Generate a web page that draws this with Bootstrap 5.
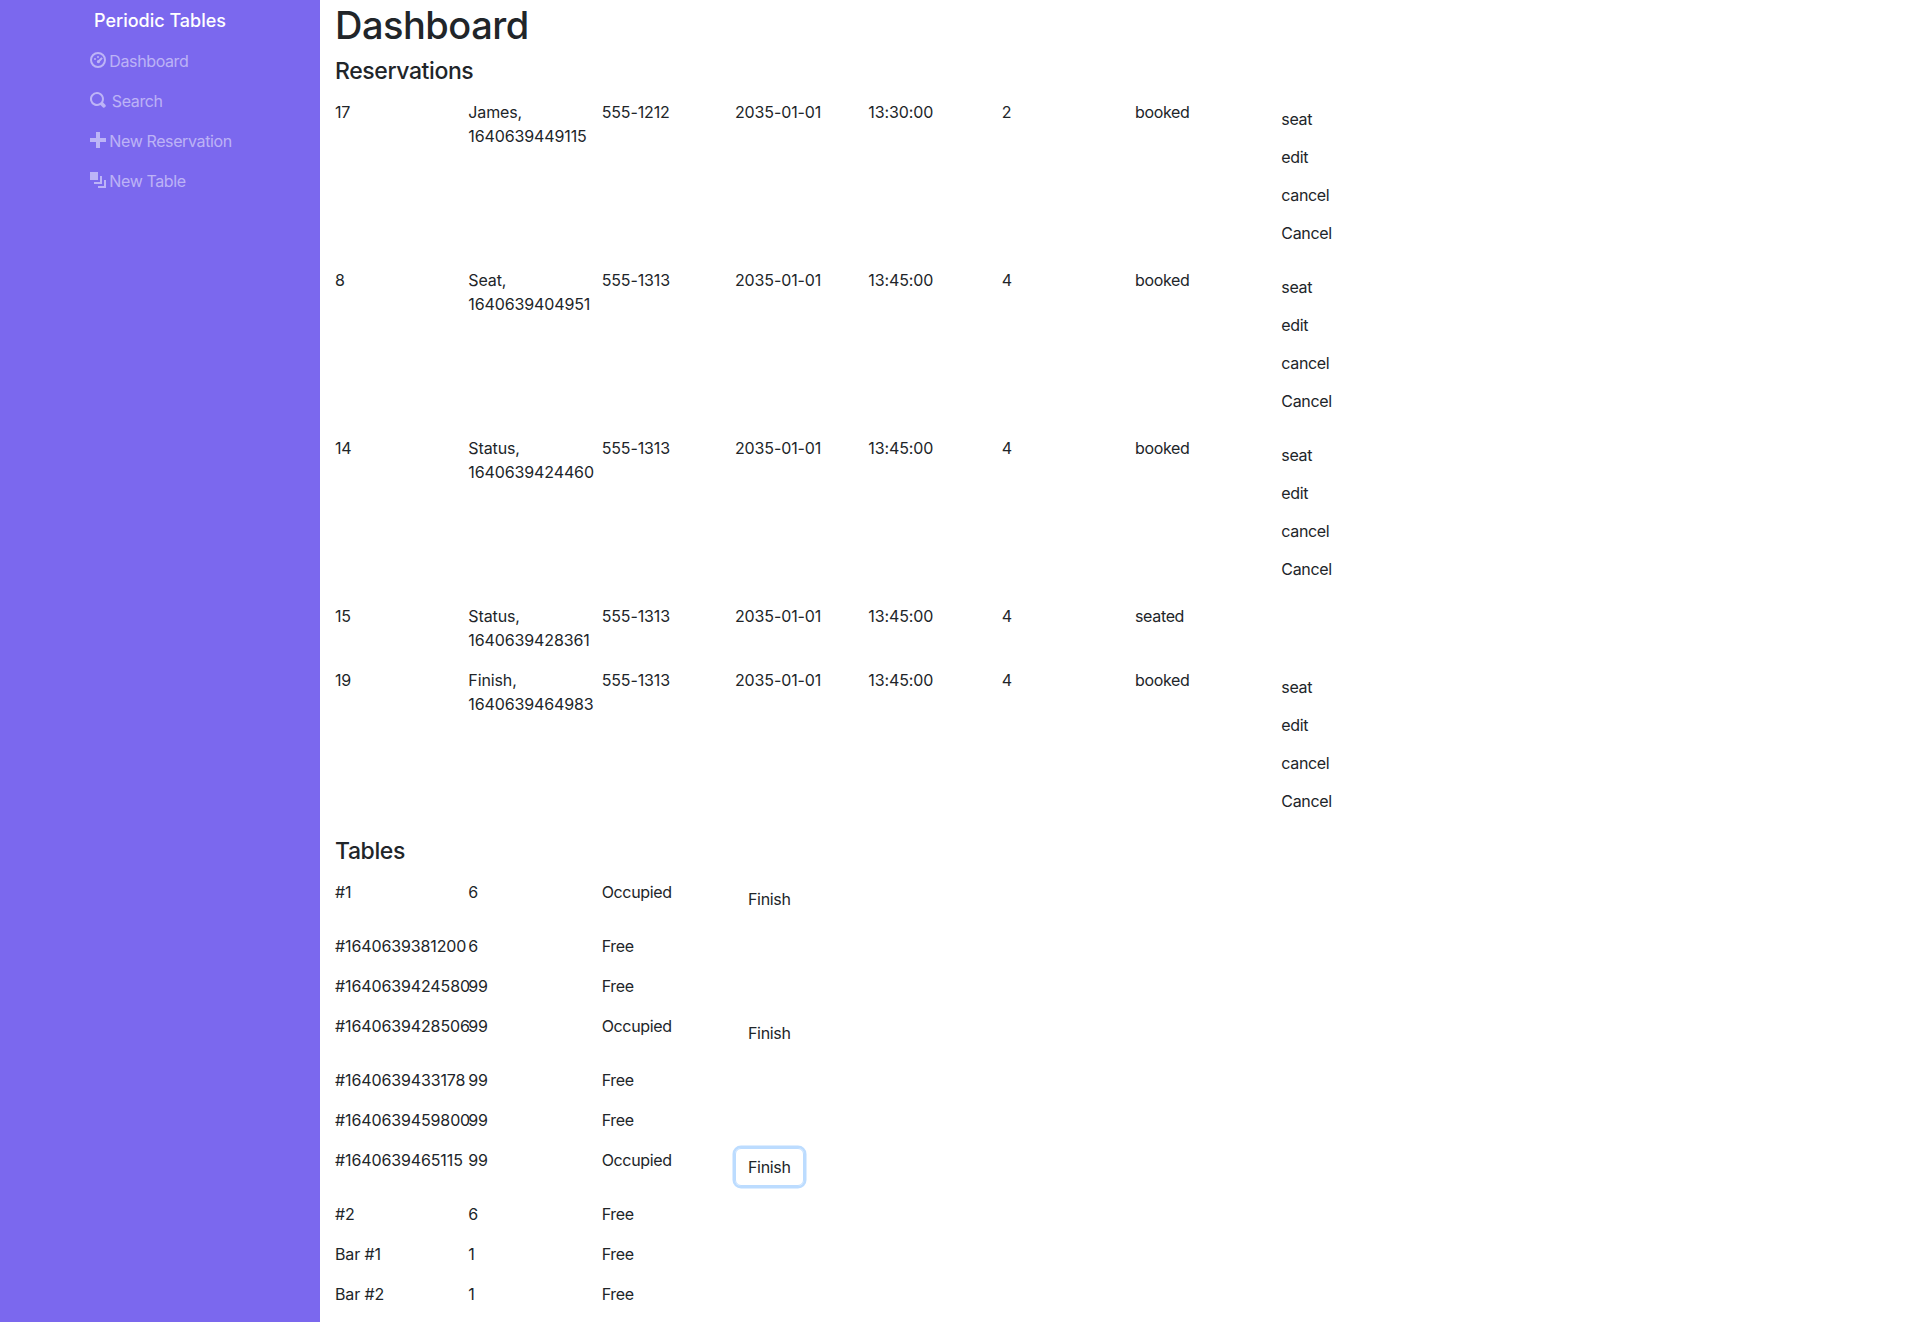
<!DOCTYPE html>
<html lang="en">
  <head>
    <meta charset="UTF-8" />
    <meta name="viewport" content="width=device-width, initial-scale=1.0" />
    <title>Periodic Tables</title>
    <link
      href="https://cdn.jsdelivr.net/npm/bootstrap@5.3.3/dist/css/bootstrap.min.css"
      rel="stylesheet"
    />
    <style>
      body {
        font-family: Inter, "Liberation Sans", sans-serif;
        color: #212529;
        letter-spacing: -0.33px;
      }
      .side-col {
        background: #7b68ee;
      }
      .brand-title {
        color: #fff;
        font-size: 18px;
        line-height: 41px;
        font-weight: 500;
        letter-spacing: 0;
      }
      .side-link {
        color: rgba(255, 255, 255, 0.5);
        padding: 8px 15px 8px 17px;
        font-size: 16px;
        letter-spacing: -0.38px;
      }
      .side-link svg {
        width: 16px;
        height: 16px;
        margin-right: -1px;
        fill: rgba(255, 255, 255, 0.5);
        vertical-align: -1px;
      }
      .page-col {
        padding-left: 15px;
        padding-right: 15px;
      }
      .page-title {
        font-size: 38px;
        line-height: 46px;
        padding-top: 2px;
        letter-spacing: -0.5px;
      }
      .section-title {
        font-size: 23px;
        line-height: 26px;
        padding-top: 2px;
        letter-spacing: -0.4px;
      }
      .data-row {
        margin-left: -15px;
        margin-right: -15px;
      }
      .data-row > .col-1 {
        padding-left: 15px;
        padding-right: 15px;
      }
      .data-row > .num-cell {
        letter-spacing: -0.12px;
      }
      .act-btn {
        color: #212529;
        letter-spacing: -0.33px;
      }
      .act-btn.is-focused {
        border-color: #bcdcff;
        box-shadow: 0 0 0 2.5px #bcdcff;
      }
    </style>
  </head>

  <body>
    <div class="container-fluid">
      <div class="row min-vh-100">
        <div class="col-2 side-col d-flex flex-column align-items-center">
          <div class="brand-title">Periodic Tables</div>
          <ul class="nav flex-column">
            <li class="nav-item">
              <a class="nav-link side-link" href="#"
                ><svg viewBox="0 0 8 8"><path d="M4 0a4 4 0 1 0 0 8 4 4 0 0 0 0-8zm0 1a3 3 0 1 1 0 6 3 3 0 0 1 0-6zM4 2a.5.5 0 1 0 0 1 .5.5 0 0 0 0-1zM2.5 3a.5.5 0 1 0 0 1 .5.5 0 0 0 0-1zM5.7 2.6 4.3 4a.8.8 0 1 0 .7.7l1.4-1.4z" fill-rule="evenodd"/></svg>
                Dashboard</a
              >
            </li>
            <li class="nav-item">
              <a class="nav-link side-link" href="#"
                ><svg viewBox="0 0 8 8"><path d="M3.5 0a3.5 3.5 0 1 0 1.7 6.55l1.3 1.2a1 1 0 0 0 1.3-1.3L6.55 5.2A3.5 3.5 0 0 0 3.5 0zm0 1a2.5 2.5 0 1 1 0 5 2.5 2.5 0 0 1 0-5z" fill-rule="evenodd"/></svg>
                &#8201;Search</a
              >
            </li>
            <li class="nav-item">
              <a class="nav-link side-link" href="#"
                ><svg viewBox="0 0 8 8"><path d="M3 0v3H0v2h3v3h2V5h3V3H5V0z"/></svg>
                New Reservation</a
              >
            </li>
            <li class="nav-item">
              <a class="nav-link side-link" href="#"
                ><svg viewBox="0 0 8 8"><path d="M0 0v4h4V0zM5 2v3H2v1h4V2zM7 4v3H4v1h4V4z"/></svg>
                New Table</a
              >
            </li>
          </ul>
        </div>

        <div class="col-10 page-col">
          <h1 class="page-title mb-2">Dashboard</h1>
          <h4 class="section-title mb-3">Reservations</h4>
          <div id="reservations"></div>
          <h4 class="section-title mb-3">Tables</h4>
          <div id="tables"></div>
        </div>
      </div>
    </div>

    <script>
      const reservations = [
        ["17", "James, 1640639449115", "555-1212", "13:30:00", "2", "booked"],
        ["8", "Seat, 1640639404951", "555-1313", "13:45:00", "4", "booked"],
        ["14", "Status, 1640639424460", "555-1313", "13:45:00", "4", "booked"],
        ["15", "Status, 1640639428361", "555-1313", "13:45:00", "4", "seated"],
        ["19", "Finish, 1640639464983", "555-1313", "13:45:00", "4", "booked"],
      ];
      const tables = [
        ["#1", "6", "Occupied"],
        ["#1640639381200", "6", "Free"],
        ["#1640639424580", "99", "Free"],
        ["#1640639428506", "99", "Occupied"],
        ["#1640639433178", "99", "Free"],
        ["#1640639459800", "99", "Free"],
        ["#1640639465115", "99", "Occupied", true],
        ["#2", "6", "Free"],
        ["Bar #1", "1", "Free"],
        ["Bar #2", "1", "Free"],
      ];

      const col = (html) => `<div class="col-1">${html}</div>`;
      const num = (html) => `<div class="col-1 num-cell">${html}</div>`;

      document.getElementById("reservations").innerHTML = reservations
        .map((r) => {
          const actions =
            r[5] === "booked"
              ? `<div class="d-flex flex-column align-items-start">
                  <a class="btn act-btn" href="#">seat</a>
                  <a class="btn act-btn" href="#">edit</a>
                  <a class="btn act-btn" href="#">cancel</a>
                  <button class="btn act-btn" type="button">Cancel</button>
                </div>`
              : "";
          return `<div class="row data-row mb-3">
            ${num(r[0])}${num(r[1])}${num(r[2])}${num("2035-01-01")}${num(r[3])}${num(r[4])}${col(r[5])}
            <div class="col-1">${actions}</div>
          </div>`;
        })
        .join("");

      document.getElementById("tables").innerHTML = tables
        .map((t) => {
          const finish =
            t[2] === "Occupied"
              ? `<button class="btn act-btn${t[3] ? " is-focused" : ""}" type="button">Finish</button>`
              : "";
          return `<div class="row data-row mb-3">
            ${num(t[0])}${num(t[1])}${col(t[2])}${col(finish)}
          </div>`;
        })
        .join("");
    </script>
    <script src="https://cdn.jsdelivr.net/npm/bootstrap@5.3.3/dist/js/bootstrap.bundle.min.js"></script>
  </body>
</html>
